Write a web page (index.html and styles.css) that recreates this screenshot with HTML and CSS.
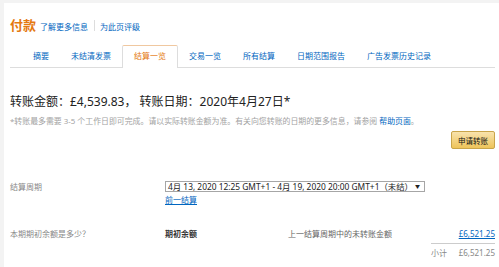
FILE: index.html
```html
<!DOCTYPE html>
<html lang="zh-CN">
<head>
<meta charset="utf-8">
<link rel="stylesheet" href="styles.css">
</head>
<body>
<div class="page">
  <div class="header">
    <span class="title">付款</span>
    <a class="hlink" href="#">了解更多信息</a>
    <span class="divider"></span>
    <a class="hlink" href="#">为此页评级</a>
  </div>
  <div class="tabs">
    <a class="tab" href="#">摘要</a>
    <a class="tab" href="#">未结清发票</a>
    <a class="tab active" href="#">结算一览</a>
    <a class="tab" href="#">交易一览</a>
    <a class="tab" href="#">所有结算</a>
    <a class="tab" href="#">日期范围报告</a>
    <a class="tab" href="#">广告发票历史记录</a>
  </div>
  <div class="summary">转账金额：£4,539.83， 转账日期：2020年4月27日*</div>
  <div class="note">*转账最多需要 3-5 个工作日即可完成。请以实际转账金额为准。有关向您转账的日期的更多信息，请参阅 <a href="#">帮助页面</a>。</div>
  <div class="btnrow"><button class="btn">申请转账</button></div>
  <div class="row period">
    <div class="label">结算周期</div>
    <div class="value">
      <div class="select"><span>4月 13, 2020 12:25 GMT+1 - 4月 19, 2020 20:00 GMT+1（未结）</span><span class="caret">▼</span></div>
      <a class="prev" href="#">前一结算</a>
    </div>
  </div>
  <div class="row balance">
    <div class="label">本期期初余额是多少？</div>
    <div class="value bal">
      <span class="bold">期初余额</span>
      <span class="desc">上一结算周期中的未转账金额</span>
      <a class="amount" href="#">£6,521.25</a>
    </div>
  </div>
  <div class="subtotal">
    <div class="subbox"><span class="sublabel">小计</span><span>£6,521.25</span></div>
  </div>
</div>
</body>
</html>
```

FILE: styles.css
```css
html, body {
  margin: 0;
  padding: 0;
  background: #f3f3f3;
  height: 100%;
}
body {
  font-family: "Noto Sans", "Noto Sans CJK SC", sans-serif;
  color: #333;
}
a { color: #0066c0; text-decoration: none; }
.page {
  margin: 3px 0 0 4px;
  background: #fff;
  min-height: 264px;
  padding: 13px 4px 0 6px;
  box-sizing: border-box;
}
.header {
  display: flex;
  align-items: baseline;
  height: 18px;
  line-height: 18px;
}
.title {
  font-size: 13px;
  font-weight: bold;
  color: #e47911;
  margin-right: 4px;
}
.hlink { font-size: 8px; }
.divider {
  display: inline-block;
  width: 1px;
  height: 11px;
  background: #ddd;
  margin: 0 5px 0 6px;
  align-self: center;
}
.tabs {
  margin-top: 11px;
  display: flex;
  padding-left: 12px;
  border-bottom: 1px solid #ddd;
  height: 22px;
}
.tab {
  font-size: 8px;
  padding: 0 10px;
  border: 1px solid transparent;
  border-bottom: none;
  height: 22px;
  box-sizing: border-box;
  line-height: 20px;
}
.tab.active {
  color: #e47911;
  border-color: #ddd;
  border-top-color: #f0c8a0;
  background: #fff;
  height: 23px;
  padding: 0 11px;
  border-radius: 2px 2px 0 0;
}
.summary {
  margin-top: 26px;
  font-size: 12px;
  line-height: 16px;
  color: #222;
}
.note {
  margin-top: 5px;
  font-size: 7.9px;
  line-height: 12px;
  color: #a3a3a3;
}
.btnrow {
  display: flex;
  justify-content: flex-end;
  margin-top: 4px;
}
.btn {
  font-family: inherit;
  font-size: 7.5px;
  color: #111;
  height: 18px;
  width: 44px;
  padding: 0;
  border: 1px solid #c9a54a;
  border-radius: 2px;
  background: linear-gradient(#f8e3ad, #eec45a);
}
.row {
  display: grid;
  grid-template-columns: 155px 1fr;
  font-size: 8px;
}
.label { color: #888; }
.period {
  margin-top: 32px;
}
.period .label { line-height: 11px; }
.select {
  width: 260px;
  height: 11px;
  border: 1px solid #a6a6a6;
  box-sizing: border-box;
  font-size: 8.4px;
  line-height: 9px;
  color: #222;
  padding: 0 4px 0 2px;
  display: flex;
  justify-content: space-between;
  white-space: nowrap;
  overflow: hidden;
}
.caret { font-size: 5px; }
.prev {
  display: inline-block;
  margin-top: 3px;
  line-height: 10px;
  text-decoration: underline;
}
.balance { margin-top: 23px; line-height: 12px; }
.bal {
  display: flex;
}
.bold { font-weight: bold; color: #333; width: 123px; }
.desc { color: #666; flex: 1; }
.amount { text-decoration: underline; }
.subtotal {
  display: flex;
  justify-content: flex-end;
  margin-top: 3px;
}
.subbox {
  width: 64px;
  border-top: 1px solid #ccc;
  font-size: 8px;
  color: #888;
  line-height: 16px;
  padding-top: 1px;
  display: flex;
  justify-content: space-between;
}
```
